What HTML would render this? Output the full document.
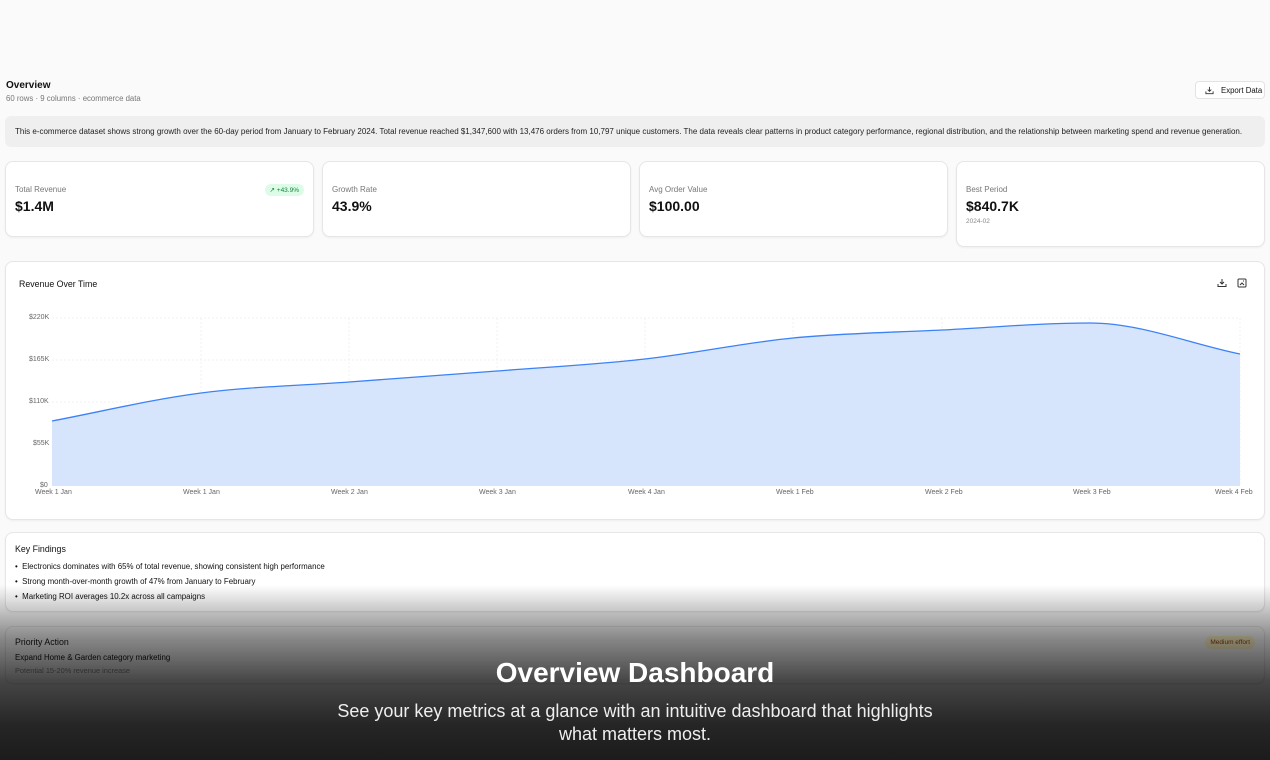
<!DOCTYPE html>
<html><head><meta charset="utf-8">
<style>
*{box-sizing:border-box;margin:0;padding:0}
body{width:1270px;height:760px;overflow:hidden;background:#fafafa;font-family:"Liberation Sans",sans-serif;color:#111;position:relative}
.card{position:absolute;background:#fff;border:1px solid #e6e6e6;border-radius:8px;box-shadow:0 1px 2px rgba(0,0,0,.05)}
.lbl{font-size:8px;color:#777}
.val{font-size:14px;font-weight:bold;margin-top:4px}
.ax{position:absolute;font-size:7px;color:#666}
</style></head><body>
<div style="position:absolute;left:6px;top:80px;font-size:10px;font-weight:bold">Overview</div>
<div style="position:absolute;left:6px;top:94px;font-size:7.8px;color:#777">60 rows · 9 columns · ecommerce data</div>
<div style="position:absolute;left:1195px;top:81px;width:70px;height:18px;border:1px solid #e3e3e3;border-radius:4px;background:#fff;font-size:7.8px;display:flex;align-items:center;padding-left:9px;gap:7px">
<svg width="9" height="9" viewBox="0 0 10 10" fill="none" stroke="#333" stroke-width="1"><path d="M5 1v5M3 4l2 2 2-2M1 6v2.5h8V6"/></svg>Export Data</div>
<div style="position:absolute;left:5px;top:116px;width:1260px;height:31px;background:#efefef;border-radius:6px;font-size:8px;color:#222;padding:11px 10px;white-space:nowrap">This e-commerce dataset shows strong growth over the 60-day period from January to February 2024. Total revenue reached $1,347,600 with 13,476 orders from 10,797 unique customers. The data reveals clear patterns in product category performance, regional distribution, and the relationship between marketing spend and revenue generation.</div>

<div class="card" style="left:5px;top:161px;width:309px;height:76px;padding:23px 9px">
<div class="lbl">Total Revenue</div><div class="val">$1.4M</div>
<div style="position:absolute;right:9px;top:22px;background:#dcfce7;color:#15803d;border-radius:7px;font-size:6.5px;padding:2px 5px">↗ +43.9%</div></div>
<div class="card" style="left:322px;top:161px;width:309px;height:76px;padding:23px 9px"><div class="lbl">Growth Rate</div><div class="val">43.9%</div></div>
<div class="card" style="left:639px;top:161px;width:309px;height:76px;padding:23px 9px"><div class="lbl">Avg Order Value</div><div class="val">$100.00</div></div>
<div class="card" style="left:956px;top:161px;width:309px;height:86px;padding:23px 9px"><div class="lbl">Best Period</div><div class="val">$840.7K</div><div style="font-size:6.5px;color:#888;margin-top:4px">2024-02</div></div>

<div class="card" style="left:5px;top:261px;width:1260px;height:259px">
<div style="position:absolute;left:13px;top:17px;font-size:8.8px">Revenue Over Time</div>
<svg style="position:absolute;left:1211px;top:16px" width="10" height="10" viewBox="0 0 10 10" fill="none" stroke="#333" stroke-width="1"><path d="M5 1v5M3 4l2 2 2-2M1 6v2.5h8V6"/></svg>
<svg style="position:absolute;left:1231px;top:16px" width="10" height="10" viewBox="0 0 10 10" fill="none" stroke="#333" stroke-width="1"><rect x="1" y="1" width="8" height="8" rx="1"/><path d="M3 7l2-2 2 2M6 3h1"/></svg>
</div>
<svg style="position:absolute;left:0;top:0" width="1270" height="520">
<g stroke="#f1f1f1" stroke-dasharray="2,2" stroke-width="1">
<line x1="52" y1="318" x2="1240" y2="318"/><line x1="52" y1="360" x2="1240" y2="360"/><line x1="52" y1="402" x2="1240" y2="402"/><line x1="52" y1="444" x2="1240" y2="444"/>
<line x1="201" y1="318" x2="201" y2="486"/><line x1="349" y1="318" x2="349" y2="486"/><line x1="497" y1="318" x2="497" y2="486"/><line x1="645" y1="318" x2="645" y2="486"/><line x1="793" y1="318" x2="793" y2="486"/><line x1="942" y1="318" x2="942" y2="486"/><line x1="1090" y1="318" x2="1090" y2="486"/><line x1="1240" y1="318" x2="1240" y2="486"/>
</g>
<path d="M52,421 C101,411.7 151,399.5 201,393 C250,386.5 300,385.7 349,382 C398,378.3 448,374.8 497,371 C546,367.2 596,364.5 645,359 C694,353.5 744,342.8 793,338 C842,333.2 892,332.5 942,330 C991,327.5 1040,323 1090,323 C1140,323 1190,343.7 1240,354 L1240,486 L52,486Z" fill="#d6e5fc"/>
<path d="M52,421 C101,411.7 151,399.5 201,393 C250,386.5 300,385.7 349,382 C398,378.3 448,374.8 497,371 C546,367.2 596,364.5 645,359 C694,353.5 744,342.8 793,338 C842,333.2 892,332.5 942,330 C991,327.5 1040,323 1090,323 C1140,323 1190,343.7 1240,354" fill="none" stroke="#3b82f6" stroke-width="1.3"/>
</svg>
<div class="ax" style="left:29px;top:314px">$220K</div>
<div class="ax" style="left:29px;top:356px">$165K</div>
<div class="ax" style="left:29px;top:398px">$110K</div>
<div class="ax" style="left:33px;top:440px">$55K</div>
<div class="ax" style="left:40px;top:482px">$0</div>
<div class="ax" style="left:35px;top:489px">Week 1 Jan</div>
<div class="ax" style="left:183px;top:489px">Week 1 Jan</div>
<div class="ax" style="left:331px;top:489px">Week 2 Jan</div>
<div class="ax" style="left:479px;top:489px">Week 3 Jan</div>
<div class="ax" style="left:628px;top:489px">Week 4 Jan</div>
<div class="ax" style="left:776px;top:489px">Week 1 Feb</div>
<div class="ax" style="left:925px;top:489px">Week 2 Feb</div>
<div class="ax" style="left:1073px;top:489px">Week 3 Feb</div>
<div class="ax" style="left:1215px;top:489px">Week 4 Feb</div>

<div class="card" style="left:5px;top:532px;width:1260px;height:80px;padding:11px 9px">
<div style="font-size:8.8px">Key Findings</div>
<div style="font-size:7.9px;margin-top:8px">•&nbsp; Electronics dominates with 65% of total revenue, showing consistent high performance</div>
<div style="font-size:7.9px;margin-top:6px">•&nbsp; Strong month-over-month growth of 47% from January to February</div>
<div style="font-size:7.9px;margin-top:6px">•&nbsp; Marketing ROI averages 10.2x across all campaigns</div>
</div>
<div class="card" style="left:5px;top:626px;width:1260px;height:58px;padding:10px 9px;background:#fafafa">
<div style="font-size:8.8px">Priority Action</div>
<div style="font-size:7.9px;margin-top:6px">Expand Home &amp; Garden category marketing</div>
<div style="font-size:7.4px;color:#888;margin-top:4px">Potential 15-20% revenue increase</div>
<div style="position:absolute;right:9px;top:9px;background:#fef3c7;color:#92400e;border-radius:7px;font-size:6.5px;padding:3px 5px">Medium effort</div>
</div>

<div style="position:absolute;left:0;top:585px;width:1270px;height:175px;background:linear-gradient(to bottom,rgba(0,0,0,0) 0%,rgba(0,0,0,.45) 30%,rgba(0,0,0,.72) 55%,rgba(0,0,0,.85) 80%,rgba(0,0,0,.89) 100%)"></div>
<div style="position:absolute;left:0;top:657px;width:1270px;text-align:center;color:#fff;font-size:28px;font-weight:bold">Overview Dashboard</div>
<div style="position:absolute;left:0;top:700px;width:1270px;text-align:center;color:#eee;font-size:18px;line-height:23px">See your key metrics at a glance with an intuitive dashboard that highlights<br>what matters most.</div>
</body></html>
